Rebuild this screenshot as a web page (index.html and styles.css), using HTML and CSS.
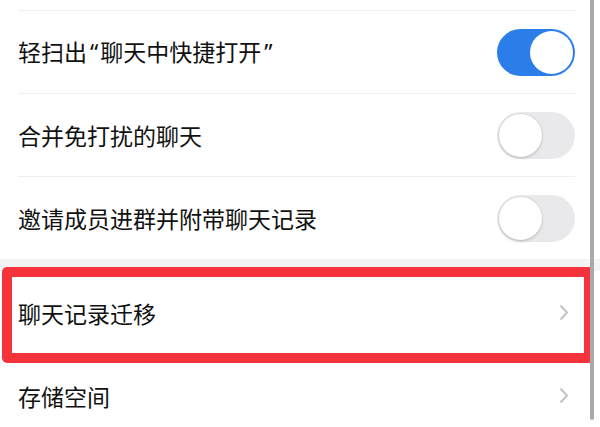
FILE: index.html
```html
<!DOCTYPE html>
<html lang="zh-CN">
<head>
<meta charset="utf-8">
<link rel="stylesheet" href="styles.css">
</head>
<body>
<div class="screen">
  <div class="top-space"></div>
  <div class="group">
    <div class="row">
      <span class="label">轻扫出<span class="q open">“</span>聊天中快捷打开<span class="q close">”</span></span>
      <span class="switch on"><span class="knob"></span></span>
    </div>
    <div class="row">
      <span class="label">合并免打扰的聊天</span>
      <span class="switch"><span class="knob"></span></span>
    </div>
    <div class="row">
      <span class="label">邀请成员进群并附带聊天记录</span>
      <span class="switch"><span class="knob"></span></span>
    </div>
  </div>
  <div class="gap"></div>
  <div class="group">
    <div class="row first">
      <span class="label">聊天记录迁移</span>
      <svg class="chev" width="10" height="17" viewBox="0 0 10 17"><path d="M1.5 1.5 L8 8.5 L1.5 15.5" fill="none" stroke="#c3c3c6" stroke-width="2"/></svg>
    </div>
    <div class="row">
      <span class="label">存储空间</span>
      <svg class="chev" width="10" height="17" viewBox="0 0 10 17"><path d="M1.5 1.5 L8 8.5 L1.5 15.5" fill="none" stroke="#c3c3c6" stroke-width="2"/></svg>
    </div>
  </div>
  <div class="highlight"></div>
  <div class="scrollbar"></div>
</div>
</body>
</html>
```
FILE: styles.css
```css
html, body {
  margin: 0;
  padding: 0;
  background: #ffffff;
}
.screen {
  position: relative;
  width: 600px;
  height: 427px;
  overflow: hidden;
  background: #ffffff;
  font-family: "Noto Sans CJK SC", "Noto Sans", sans-serif;
  color: #111111;
}
.top-space {
  height: 10px;
}
.group {
  background: #ffffff;
}
.row {
  position: relative;
  height: 83px;
  padding: 0 25px 0 18px;
  display: flex;
  align-items: center;
  justify-content: space-between;
  box-sizing: border-box;
}
.row::before {
  content: "";
  position: absolute;
  left: 18px;
  right: 25px;
  top: 0;
  height: 1px;
  background: #efeff1;
}
.row.first::before {
  display: none;
}
.label {
  font-size: 23px;
  line-height: 30px;
  letter-spacing: 0;
}
.q {
  font-family: "Noto Sans", sans-serif;
}
.q.open {
  margin: 0 2px 0 3px;
}
.q.close {
  margin: 0 0 0 3px;
}
.switch {
  position: relative;
  width: 78px;
  height: 47px;
  border-radius: 24px;
  background: #e9e9eb;
  box-sizing: border-box;
  flex-shrink: 0;
  margin-top: 1px;
}
.switch .knob {
  position: absolute;
  top: 2px;
  left: 2px;
  width: 43px;
  height: 43px;
  border-radius: 50%;
  background: #ffffff;
  box-shadow: 0 0 0 1px rgba(0,0,0,0.06), 0 2px 3px rgba(0,0,0,0.12);
}
.switch.on {
  background: #2b7de9;
}
.switch.on .knob {
  left: auto;
  right: 2px;
  box-shadow: none;
}
.chev {
  margin-right: 6px;
}
.gap {
  height: 12px;
  background: #f4f4f6;
}
.highlight {
  position: absolute;
  left: 2px;
  top: 267px;
  width: 592px;
  height: 96px;
  border: 10px solid #f5333b;
  border-radius: 5px;
  box-sizing: border-box;
}
.scrollbar {
  position: absolute;
  left: 590px;
  top: 0;
  width: 4px;
  height: 420px;
  background: #a9a9a9;
  border-radius: 0 0 2px 2px;
}
```
